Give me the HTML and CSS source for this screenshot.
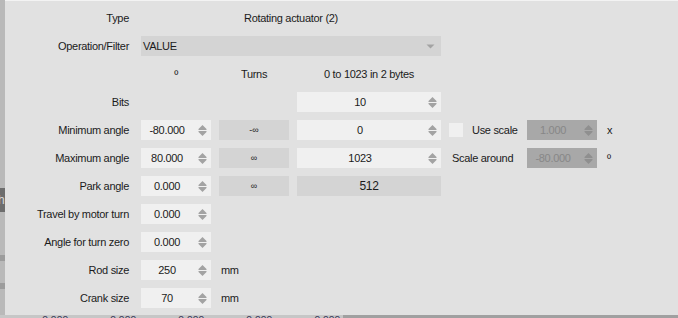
FILE: index.html
```html
<!DOCTYPE html>
<html lang="en">
<head>
    <meta charset="UTF-8">
    <title>Rotating actuator</title>
    <link rel="stylesheet" href="styles.css">
</head>
<body>
    <div class="edge-left">
        <div class="edge-block"></div>
        <div class="edge-tab">h</div>
        <div class="edge-gap"></div>
        <div class="edge-line"></div>
        <div class="edge-gap small"></div>
        <div class="edge-line"></div>
    </div>

    <div class="panel">
        <div class="form">
            <div class="label">Type</div>
            <div class="title">Rotating actuator (2)</div>

            <div class="label">Operation/Filter</div>
            <div class="select">
                <span>VALUE</span>
                <svg width="9" height="5" viewBox="0 0 9 5"><polygon points="0.5,0.5 8.5,0.5 4.5,4.5" fill="#a3a3a3"/></svg>
            </div>

            <div class="head c2">º</div>
            <div class="head c3">Turns</div>
            <div class="head c4">0 to 1023 in 2 bytes</div>

            <div class="label">Bits</div>
            <div class="spin c4"><span class="val">10</span><span class="arrows"><svg width="9" height="13" viewBox="0 0 9 13"><polygon points="0.5,5 4.5,1 8.5,5 8.5,6 0.5,6"/><polygon points="0.5,7 8.5,7 8.5,8 4.5,12 0.5,8"/></svg></span></div>

            <div class="label">Minimum angle</div>
            <div class="spin"><span class="val">-80.000</span><span class="arrows"><svg width="9" height="13" viewBox="0 0 9 13"><polygon points="0.5,5 4.5,1 8.5,5 8.5,6 0.5,6"/><polygon points="0.5,7 8.5,7 8.5,8 4.5,12 0.5,8"/></svg></span></div>
            <div class="btn">-∞</div>
            <div class="spin"><span class="val">0</span><span class="arrows"><svg width="9" height="13" viewBox="0 0 9 13"><polygon points="0.5,5 4.5,1 8.5,5 8.5,6 0.5,6"/><polygon points="0.5,7 8.5,7 8.5,8 4.5,12 0.5,8"/></svg></span></div>
            <div class="check"><span class="box"></span>Use scale</div>
            <div class="spin off"><span class="val">1.000</span><span class="arrows"><svg width="9" height="13" viewBox="0 0 9 13"><polygon points="0.5,5 4.5,1 8.5,5 8.5,6 0.5,6"/><polygon points="0.5,7 8.5,7 8.5,8 4.5,12 0.5,8"/></svg></span></div>
            <div class="unit">x</div>

            <div class="label">Maximum angle</div>
            <div class="spin"><span class="val">80.000</span><span class="arrows"><svg width="9" height="13" viewBox="0 0 9 13"><polygon points="0.5,5 4.5,1 8.5,5 8.5,6 0.5,6"/><polygon points="0.5,7 8.5,7 8.5,8 4.5,12 0.5,8"/></svg></span></div>
            <div class="btn">∞</div>
            <div class="spin"><span class="val">1023</span><span class="arrows"><svg width="9" height="13" viewBox="0 0 9 13"><polygon points="0.5,5 4.5,1 8.5,5 8.5,6 0.5,6"/><polygon points="0.5,7 8.5,7 8.5,8 4.5,12 0.5,8"/></svg></span></div>
            <div class="side-label">Scale around</div>
            <div class="spin off"><span class="val">-80.000</span><span class="arrows"><svg width="9" height="13" viewBox="0 0 9 13"><polygon points="0.5,5 4.5,1 8.5,5 8.5,6 0.5,6"/><polygon points="0.5,7 8.5,7 8.5,8 4.5,12 0.5,8"/></svg></span></div>
            <div class="unit">º</div>

            <div class="label">Park angle</div>
            <div class="spin"><span class="val">0.000</span><span class="arrows"><svg width="9" height="13" viewBox="0 0 9 13"><polygon points="0.5,5 4.5,1 8.5,5 8.5,6 0.5,6"/><polygon points="0.5,7 8.5,7 8.5,8 4.5,12 0.5,8"/></svg></span></div>
            <div class="btn">∞</div>
            <div class="readonly">512</div>

            <div class="label">Travel by motor turn</div>
            <div class="spin"><span class="val">0.000</span><span class="arrows"><svg width="9" height="13" viewBox="0 0 9 13"><polygon points="0.5,5 4.5,1 8.5,5 8.5,6 0.5,6"/><polygon points="0.5,7 8.5,7 8.5,8 4.5,12 0.5,8"/></svg></span></div>

            <div class="label">Angle for turn zero</div>
            <div class="spin"><span class="val">0.000</span><span class="arrows"><svg width="9" height="13" viewBox="0 0 9 13"><polygon points="0.5,5 4.5,1 8.5,5 8.5,6 0.5,6"/><polygon points="0.5,7 8.5,7 8.5,8 4.5,12 0.5,8"/></svg></span></div>

            <div class="label">Rod size</div>
            <div class="spin"><span class="val">250</span><span class="arrows"><svg width="9" height="13" viewBox="0 0 9 13"><polygon points="0.5,5 4.5,1 8.5,5 8.5,6 0.5,6"/><polygon points="0.5,7 8.5,7 8.5,8 4.5,12 0.5,8"/></svg></span></div>
            <div class="unit">mm</div>

            <div class="label">Crank size</div>
            <div class="spin"><span class="val">70</span><span class="arrows"><svg width="9" height="13" viewBox="0 0 9 13"><polygon points="0.5,5 4.5,1 8.5,5 8.5,6 0.5,6"/><polygon points="0.5,7 8.5,7 8.5,8 4.5,12 0.5,8"/></svg></span></div>
            <div class="unit">mm</div>
        </div>
    </div>

    <div class="edge-bottom">
        <div class="under">
            <span>0.000</span><span>0.000</span><span>0.000</span><span>0.000</span><span>0.000</span>
        </div>
    </div>
</body>
</html>
```

FILE: styles.css
```css
/* Janela de fundo */
body {
    margin: 0;
    width: 678px;
    height: 318px;
    overflow: hidden;
    background: #a0a0a0;
    font-family: "Liberation Sans", Arial, sans-serif;
    font-size: 11px;
    letter-spacing: -0.3px;
    color: #1b1b1b;
    display: grid;
    grid-template-columns: 5px 673px;
    grid-template-rows: 315px 3px;
}

.edge-left {
    display: flex;
    flex-direction: column;
    background: #b9b9b9;
    overflow: hidden;
}

.edge-block {
    height: 188px;
}

.edge-tab {
    height: 24px;
    background: #6d6d6d;
    color: #d8d8d8;
    font-size: 12px;
    line-height: 24px;
    text-indent: -2px;
}

.edge-gap {
    height: 43px;
}

.edge-gap.small {
    height: 22px;
}

.edge-line {
    height: 6px;
    background: #9c9c9c;
}

.edge-bottom {
    grid-column: 1 / span 2;
    background: #a0a0a0;
    overflow: hidden;
}

.under {
    width: 343px;
    height: 3px;
    background: #c6c6c6;
    display: flex;
    gap: 42px;
    padding-left: 42px;
    box-sizing: border-box;
    line-height: 11px;
    color: #3a3a5a;
}

/* Painel principal */
.panel {
    background: #e1e1e1;
    border-top: 1px solid #f3f3f3;
}

.form {
    display: grid;
    grid-template-columns: 128px 70px 70px 144px 70px 70px auto;
    grid-auto-rows: 20px;
    column-gap: 8px;
    row-gap: 8px;
    padding-top: 7px;
    line-height: 20px;
    white-space: nowrap;
}

.label {
    grid-column: 1;
    text-align: right;
    padding-right: 4px;
}

.title {
    grid-column: 2 / span 3;
    text-align: center;
}

.select {
    grid-column: 2 / span 3;
    background: #d4d4d4;
    display: flex;
    align-items: center;
    justify-content: space-between;
    padding: 0 6px 0 2px;
}

.head {
    text-align: center;
}

.c2 { grid-column: 2; }
.c3 { grid-column: 3; }
.c4 { grid-column: 4; }

/* Campos numéricos */
.spin {
    display: flex;
    background: #f0f0f0;
}

.spin .val {
    flex: 1;
    text-align: center;
}

.spin .arrows {
    width: 18px;
    display: flex;
    align-items: center;
    justify-content: center;
}

.spin svg {
    fill: #a3a3a3;
}

.spin.off {
    background: #a8a8a8;
    color: #878787;
}

.spin.off svg {
    fill: #8f8f8f;
}

.btn {
    background: #d4d4d4;
    text-align: center;
    font-size: 9px;
    letter-spacing: 0;
}

.readonly {
    background: #d4d4d4;
    text-align: center;
    font-size: 12px;
}

.check {
    display: flex;
    align-items: center;
    gap: 9px;
}

.check .box {
    width: 14px;
    height: 14px;
    background: #f0f0f0;
}

.side-label {
    padding-left: 3px;
}

.unit {
    padding-left: 2px;
}
```
